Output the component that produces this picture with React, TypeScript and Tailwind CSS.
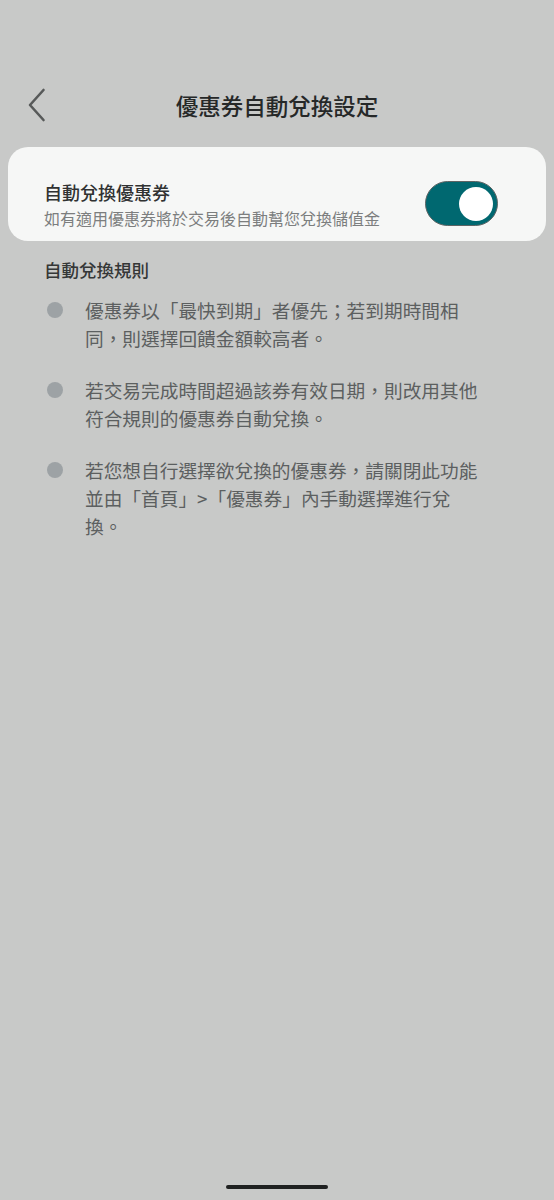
import React from "react";

const rules = [
  "優惠券以「最快到期」者優先；若到期時間相同，則選擇回饋金額較高者。",
  "若交易完成時間超過該券有效日期，則改用其他符合規則的優惠券自動兌換。",
  "若您想自行選擇欲兌換的優惠券，請關閉此功能並由「首頁」>「優惠券」內手動選擇進行兌換。",
];

export default function App() {
  return (
    <div
      className="relative flex min-h-[1200px] w-[554px] flex-col bg-[#c8c9c8]"
      style={{ fontFamily: '"Noto Sans CJK TC", "Noto Sans", sans-serif' }}
    >
      {/* Header */}
      <div className="relative mt-[77px] flex h-[56px] items-center justify-center">
        <button className="absolute left-[24px] top-[7px] flex h-[42px] w-[28px] items-center justify-center">
          <svg width="20" height="34" viewBox="0 0 20 34" fill="none">
            <path d="M15.5 2 L2 17 L15.5 32" stroke="#575959" strokeWidth="2.6" strokeLinecap="round" strokeLinejoin="round" />
          </svg>
        </button>
        <h1 className="text-[22.5px] font-medium leading-[30px] text-[#262828]">優惠券自動兌換設定</h1>
      </div>

      {/* Card */}
      <div className="mx-[8px] mt-[14px] flex items-center rounded-[20px] bg-[#f6f7f6] pb-[11px] pl-[36px] pr-[48px] pt-[33px]">
        <div className="flex flex-1 flex-col">
          <div className="text-[18px] font-medium leading-[24px] text-[#303232]">自動兌換優惠券</div>
          <div className="mt-[2px] text-[16px] leading-[24px] text-[#7c7e7e]">如有適用優惠券將於交易後自動幫您兌換儲值金</div>
        </div>
        <div className="-mt-[3px] flex h-[45px] w-[73px] items-center justify-end rounded-full border border-[#5d6464] bg-[#006870] pr-[4px]">
          <div className="h-[34px] w-[34px] rounded-full bg-white" />
        </div>
      </div>

      {/* Rules */}
      <div className="ml-[44px] mt-[17px] text-[17.5px] font-medium leading-[24px] text-[#353737]">自動兌換規則</div>
      <div className="ml-[44px] mt-[14px] flex flex-col gap-[24px]">
        {rules.map((r, i) => (
          <div key={i} className="flex items-start">
            <div className="ml-[3px] mt-[6px] h-[16px] w-[16px] shrink-0 rounded-full bg-[#9da2a5]" />
            <p className="ml-[22px] w-[398px] text-[18.7px] leading-[28px] text-[#5c5f60]">{r}</p>
          </div>
        ))}
      </div>

      {/* Home indicator */}
      <div className="mt-auto mb-[11px] flex justify-center">
        <div className="h-[4px] w-[102px] rounded-full bg-[#1f2121]" />
      </div>
    </div>
  );
}
